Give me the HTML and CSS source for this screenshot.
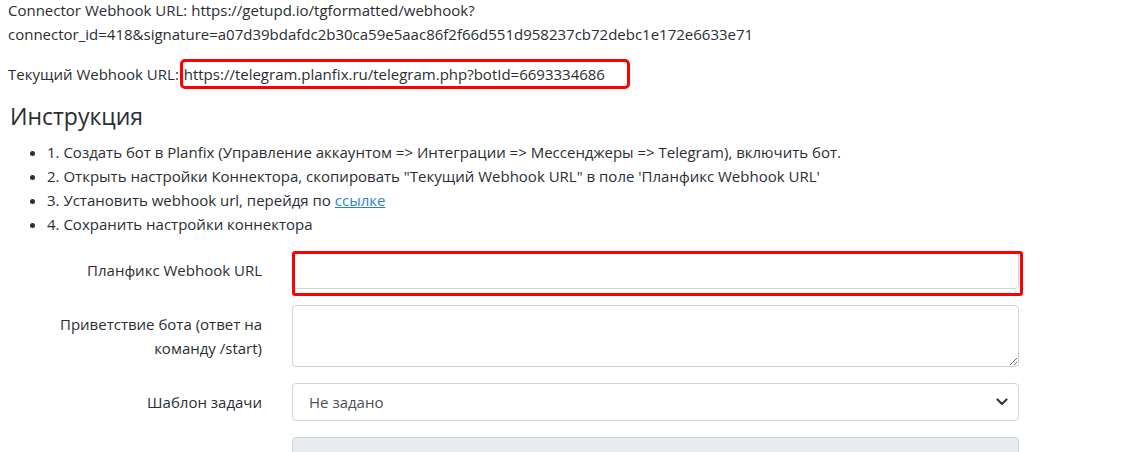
FILE: index.html
```html
<!DOCTYPE html>
<html lang="ru">
<head>
    <meta charset="UTF-8">
    <meta name="viewport" content="width=device-width, initial-scale=1.0">
    <title>Коннектор Telegram</title>
    <link rel="stylesheet" href="styles.css">
</head>
<body>
    <div class="container">
        <p>Connector Webhook URL: https://getupd.io/tgformatted/webhook?<br>connector_id=418&amp;signature=a07d39bdafdc2b30ca59e5aac86f2f66d551d958237cb72debc1e172e6633e71</p>
        <p>Текущий Webhook URL: <span class="mark">https://telegram.planfix.ru/telegram.php?botId=6693334686</span></p>

        <h3>Инструкция</h3>
        <ul class="steps">
            <li>1. Создать бот в Planfix (Управление аккаунтом =&gt; Интеграции =&gt; Мессенджеры =&gt; Telegram), включить бот.</li>
            <li>2. Открыть настройки Коннектора, скопировать "Текущий Webhook URL" в поле 'Планфикс Webhook URL'</li>
            <li>3. Установить webhook url, перейдя по <a href="#">ссылке</a></li>
            <li>4. Сохранить настройки коннектора</li>
        </ul>

        <form class="settings">
            <label for="planfix-url">Планфикс Webhook URL</label>
            <div class="field marked">
                <input type="text" id="planfix-url" class="form-control">
            </div>

            <label for="greeting">Приветствие бота (ответ на команду /start)</label>
            <div class="field">
                <textarea id="greeting" class="form-control" rows="2"></textarea>
            </div>

            <label>Шаблон задачи</label>
            <div class="field">
                <div class="form-select">
                    <span>Не задано</span>
                    <svg width="12" height="8" viewBox="0 0 12 8"><path d="M1.5 1.5 L6 6 L10.5 1.5" fill="none" stroke="#343a40" stroke-width="2.2" stroke-linecap="round" stroke-linejoin="round"/></svg>
                </div>
            </div>

            <label></label>
            <div class="field">
                <input type="text" class="form-control" disabled>
            </div>
        </form>
    </div>
</body>
</html>
```

FILE: styles.css
```css
body {
    margin: 0;
    background-color: #ffffff;
    color: #2a2e33;
    font-family: "Open Sans", "Noto Sans", sans-serif;
    font-size: 15px;
    line-height: 24px;
}

.container {
    margin-top: -2px;
    padding: 0 8px;
}

p {
    margin: 0 0 16px 0;
}

/* Рамка-выделение на скриншоте */
.mark {
    outline: 3px solid #ff0000;
    outline-offset: 0;
    border-radius: 2px;
    padding: 2px 22px 2px 1px;
    margin-left: 0;
}

h3 {
    margin: 0 0 10px 0;
    font-size: 23px;
    font-weight: 500;
    line-height: 28px;
    padding-left: 2px;
}

.steps {
    margin: 0 0 15px 0;
    padding-left: 39px;
}

.steps a {
    color: #2f7fd1;
}

.settings {
    display: grid;
    grid-template-columns: 237px 727px;
    column-gap: 30px;
    row-gap: 16px;
    margin-left: 17px;
}

.settings label {
    text-align: right;
    padding-top: 7px;
}

.field {
    position: relative;
}

.form-control {
    display: block;
    box-sizing: border-box;
    width: 100%;
    height: 38px;
    padding: 6px 12px;
    font: inherit;
    color: #495057;
    background-color: #ffffff;
    border: 1px solid #ced4da;
    border-radius: 4px;
}

textarea.form-control {
    height: 62px;
}

.form-control:disabled {
    background-color: #e9ecef;
}

.marked::after {
    content: "";
    position: absolute;
    left: 0;
    top: 0;
    right: -4px;
    bottom: -7px;
    border: 3px solid #ff0000;
    border-radius: 3px;
}

.form-select {
    display: flex;
    align-items: center;
    justify-content: space-between;
    box-sizing: border-box;
    height: 38px;
    padding: 0 10px 0 16px;
    color: #495057;
    border: 1px solid #ced4da;
    border-radius: 4px;
}
```
